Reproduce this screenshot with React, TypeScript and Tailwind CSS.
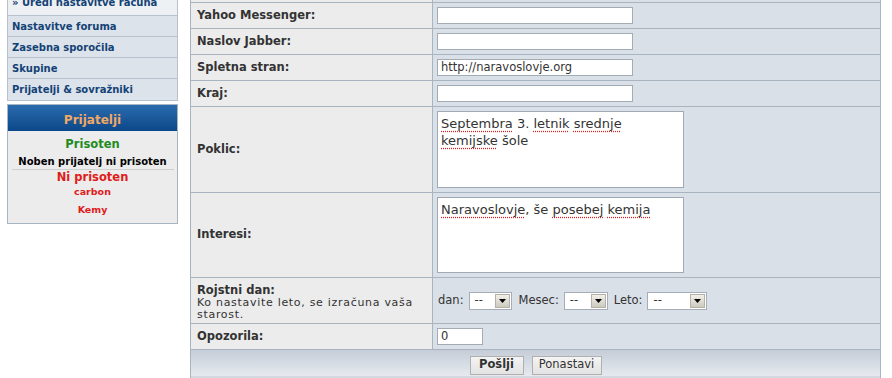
import React from "react";

function Row({ label, h, top, children }: { label?: React.ReactNode; h: string; top?: boolean; children?: React.ReactNode }) {
  return (
    <div className={`grid grid-cols-[242px_1fr] ${h}`}>
      <div
        className={`flex ${top ? "items-start pt-[5px]" : "items-center"} pl-[6px] bg-[#ececec] border-r border-b border-[#a9b4c1] text-[11.5px] font-bold text-[#333]`}
      >
        {label}
      </div>
      <div className="flex items-center pl-[4px] bg-[#d9e0e8] border-b border-[#a9b4c1]">{children}</div>
    </div>
  );
}

function TextInput({ value, w }: { value?: string; w: string }) {
  return (
    <div className={`${w} h-[17px] border border-[#a3abb5] bg-white px-[3px] text-[11.5px] leading-[15px] text-[#333]`}>
      {value}
    </div>
  );
}

function Sel({ w }: { w: string }) {
  return (
    <div className={`${w} h-[18px] border border-[#a5adb8] bg-white flex items-center justify-between pl-[5px] pr-[1px]`}>
      <span className="text-[11.5px] text-[#333] leading-none">--</span>
      <span className="w-[15px] h-[14px] bg-gradient-to-b from-[#f2f0ea] to-[#ccc9bf] border border-[#b5b1a7] flex items-center justify-center">
        <svg width="7" height="4" viewBox="0 0 7 4">
          <path d="M0 0h7L3.5 4z" fill="#000" />
        </svg>
      </span>
    </div>
  );
}

const sp = "underline decoration-dotted decoration-[#e02020] underline-offset-[3px]";

export default function App() {
  const menu = ["Nastavitve foruma", "Zasebna sporočila", "Skupine", "Prijatelji & sovražniki"];

  return (
    <div className="w-[892px] h-[378px] overflow-hidden bg-white flex items-start font-['DejaVu_Sans',Verdana,sans-serif]">
      {/* sidebar */}
      <div className="ml-[7px] w-[171px] flex flex-col shrink-0">
        <div className="mt-[-11px] border border-[#b7c2ce] bg-[#dde3ea]">
          <div className="h-[26px] flex items-center pl-[4px] border-b border-[#b7c2ce] bg-[#eef1f4] text-[10px] font-bold text-[#134276]">
            » Uredi nastavitve računa
          </div>
          {menu.map((m) => (
            <div
              key={m}
              className="h-[21px] flex items-center pl-[4px] border-b border-[#b7c2ce] last:border-b-0 text-[10px] font-bold text-[#134276]"
            >
              {m}
            </div>
          ))}
        </div>

        <div className="mt-[3px] border border-[#a7b4c2] bg-[#ececec] flex flex-col items-center">
          <div className="w-full h-[26px] flex items-center justify-center pt-[3px] bg-gradient-to-b from-[#2a6cae] to-[#0b4789] text-[12px] font-bold text-[#f2a865]">
            Prijatelji
          </div>
          <div className="mt-[6px] leading-[14px] text-[11.5px] font-bold text-[#228b1e]">Prisoten</div>
          <div className="mt-[4px] leading-[13px] text-[10px] font-bold text-black">Noben prijatelj ni prisoten</div>
          <div className="mt-[1px] w-[162px] h-px bg-[#cfcfcf]" />
          <div className="leading-[14px] text-[11.5px] font-bold text-[#e01b1b]">Ni prisoten</div>
          <div className="mt-[1px] leading-[13px] text-[9.5px] font-bold text-[#e01b1b]">carbon</div>
          <div className="mt-[5px] mb-[7px] leading-[13px] text-[9.5px] font-bold text-[#e01b1b]">Kemy</div>
        </div>
      </div>

      {/* main form */}
      <div className="ml-[12px] mt-[-23px] w-[691px] shrink-0 flex flex-col border-l border-r border-[#a9b4c1]">
        <Row h="h-[26px]" />
        <Row h="h-[26px]" label="Yahoo Messenger:">
          <TextInput w="w-[196px]" />
        </Row>
        <Row h="h-[26px]" label="Naslov Jabber:">
          <TextInput w="w-[196px]" />
        </Row>
        <Row h="h-[26px]" label="Spletna stran:">
          <TextInput w="w-[196px]" value="http://naravoslovje.org" />
        </Row>
        <Row h="h-[26px]" label="Kraj:">
          <TextInput w="w-[196px]" />
        </Row>
        <Row h="h-[86px]" label="Poklic:">
          <div className="w-[247px] h-[77px] border border-[#a0a9b4] bg-white px-[3px] pt-[3px] text-[13px] leading-[17px] text-[#333]">
            <span className={sp}>Septembra</span> 3. <span className={sp}>letnik</span> <span className={sp}>srednje</span>
            <br />
            <span className={sp}>kemijske</span> šole
          </div>
        </Row>
        <Row h="h-[85px]" label="Interesi:">
          <div className="w-[247px] h-[76px] border border-[#a0a9b4] bg-white px-[3px] pt-[3px] text-[13px] leading-[17px] text-[#333]">
            <span className={sp}>Naravoslovje</span>, še <span className={sp}>posebej</span> <span className={sp}>kemija</span>
          </div>
        </Row>
        <Row
          h="h-[46px]"
          top
          label={
            <div className="flex flex-col">
              <span className="leading-[14px]">Rojstni dan:</span>
              <span className="w-[225px] text-[11px] tracking-[0.7px] font-normal leading-[12px] text-[#333]">
                Ko nastavite leto, se izračuna vaša starost.
              </span>
            </div>
          }
        >
          <div className="flex items-center gap-[5px] pl-[1px] text-[11.5px] text-[#333]">
            <span>dan:</span>
            <Sel w="w-[43px]" />
            <span className="ml-[2px]">Mesec:</span>
            <Sel w="w-[44px]" />
            <span className="ml-[1px]">Leto:</span>
            <Sel w="w-[60px]" />
          </div>
        </Row>
        <Row h="h-[26px]" label="Opozorila:">
          <TextInput w="w-[46px]" value="0" />
        </Row>
        <div className="h-[26px] flex items-center justify-center gap-[8px] bg-gradient-to-b from-[#c5cdd8] to-[#e6eaef]">
          <button className="w-[54px] h-[19px] mt-[4px] border border-[#b0b0b0] bg-gradient-to-b from-[#f4f4f4] to-[#e2e2e2] text-[11.5px] font-bold text-[#333] leading-none">
            Pošlji
          </button>
          <button className="w-[70px] h-[19px] mt-[4px] border border-[#b0b0b0] bg-gradient-to-b from-[#f4f4f4] to-[#e2e2e2] text-[11.5px] text-[#333] leading-none">
            Ponastavi
          </button>
        </div>
        <div className="h-[3px] bg-[#d3d9e0]" />
      </div>
    </div>
  );
}
